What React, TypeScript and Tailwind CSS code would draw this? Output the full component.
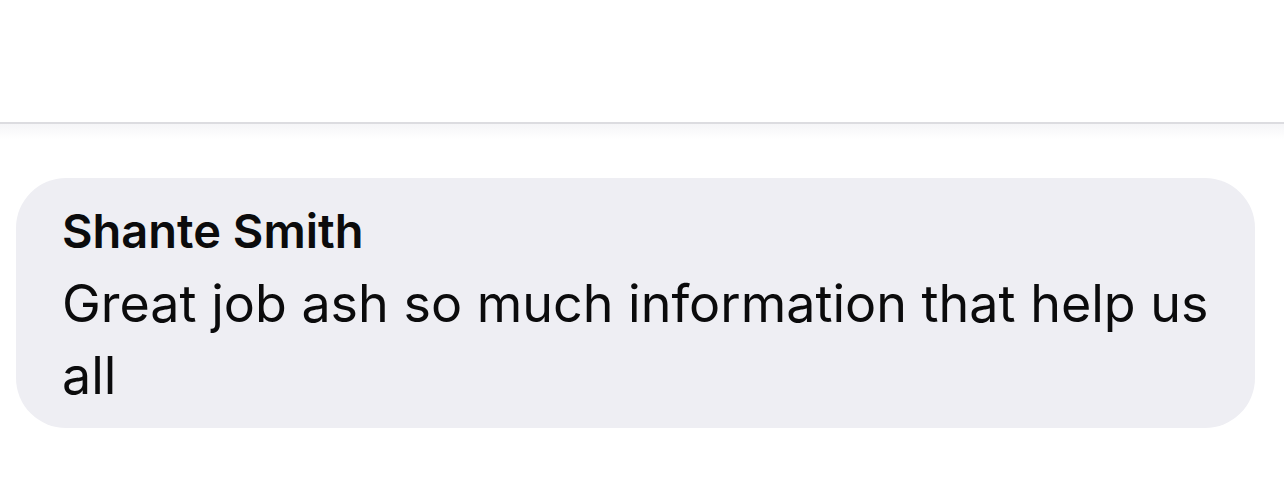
export default function App() {
  return (
    <div className="min-h-[477px] w-full bg-white font-['Inter','Liberation_Sans',sans-serif] text-[#0b0b0c]">
      {/* top area */}
      <div className="h-[122px]" />
      <div className="h-[2px] bg-[#dcdce0]" />
      <div className="h-[15px] bg-gradient-to-b from-[#f5f5f7] to-white" />

      <div className="pt-[39px] pl-4 pr-[29px]">
        <div className="rounded-[50px] bg-[#eeeef3] pl-[46px] pr-[30px] pt-[26px] pb-[16px]">
          <div className="text-[47px] font-semibold leading-[54px]">Shante Smith</div>
          <p className="mt-[10px] text-[52px] leading-[72px]">
            Great job ash so much information that help us all
          </p>
        </div>
      </div>
    </div>
  )
}
